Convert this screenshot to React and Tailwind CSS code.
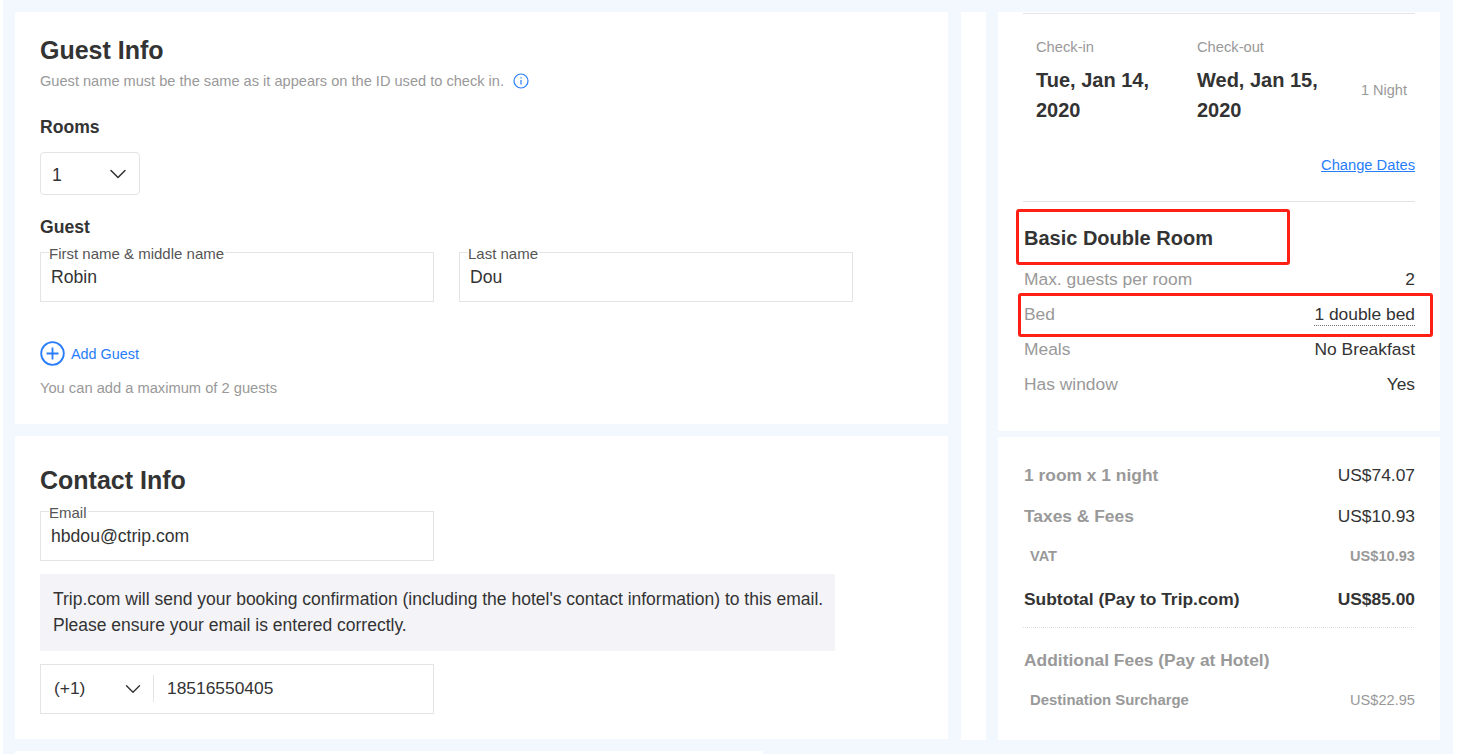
import { ChevronDown } from "lucide-react";

function Field({ label, value, className }) {
  return (
    <div className={`relative h-[50px] border border-[#e4e4e4] ${className}`}>
      <span className="absolute left-2 top-[-7px] bg-white pr-px text-[15px] leading-4 text-[#555]">{label}</span>
      <div className="pl-[10px] pt-[13px] text-[17.6px] leading-[22px] text-[#333]">{value}</div>
    </div>
  );
}

function SpecRow({ label, value, dotted }) {
  return (
    <div className="flex h-[35px] items-center justify-between pl-px text-[17.4px] text-[#999]">
      <span>{label}</span>
      <span className={dotted ? "border-b border-dotted border-[#777] text-[#333] leading-[21px]" : "text-[#333]"}>{value}</span>
    </div>
  );
}

function InfoIcon() {
  return (
    <svg width="16" height="16" viewBox="0 0 16 16" fill="none" stroke="#287dfa" strokeWidth="1.2">
      <circle cx="8" cy="8" r="7" />
      <path d="M8 7v4.5M8 4.2v1.3" />
    </svg>
  );
}

function PlusIcon() {
  return (
    <svg width="25" height="25" viewBox="0 0 25 25" fill="none" stroke="#287dfa">
      <circle cx="12.5" cy="12.5" r="11.3" strokeWidth="1.8" />
      <path d="M6.5 12.5h12M12.5 6.5v12" strokeWidth="1.8" />
    </svg>
  );
}

export default function App() {
  return (
    <div className="h-[755px] overflow-hidden bg-white pl-[3px] pr-[6px] font-['Liberation_Sans',Arial,sans-serif]">
      <div className="flex h-[754px] overflow-hidden bg-[#f3f8fe] pl-3 pt-3">
        <div className="w-[933px] shrink-0">
          <section className="h-[412px] bg-white pl-[25px] pt-[22px]">
            <h2 className="text-[25px] font-bold leading-8 text-[#333]">Guest Info</h2>
            <div className="mt-[7px] flex items-center text-[14.6px] leading-4 text-[#999]">
              Guest name must be the same as it appears on the ID used to check in.
              <span className="ml-[9px]"><InfoIcon /></span>
            </div>
            <h3 className="mt-[28px] text-[17.6px] font-bold leading-5 text-[#333]">Rooms</h3>
            <div className="mt-[15px] flex h-[43px] w-[100px] items-center justify-between rounded border border-[#e4e4e4] pl-[11px] pr-[7px] text-[17.6px] text-[#333]">
              <span className="pt-[3px]">1</span>
              <ChevronDown size={28} strokeWidth={1.3} />
            </div>
            <h3 className="mt-[22px] text-[17.6px] font-bold leading-5 text-[#333]">Guest</h3>
            <div className="mt-[15px] flex gap-[25px]">
              <Field label="First name & middle name" value="Robin" className="w-[394px]" />
              <Field label="Last name" value="Dou" className="w-[394px]" />
            </div>
            <div className="mt-[39px] flex items-center gap-[6px] text-[14.4px] text-[#287dfa]">
              <PlusIcon />
              <span className="pt-[2px]">Add Guest</span>
            </div>
            <p className="mt-[14px] text-[14.7px] leading-4 text-[#999]">You can add a maximum of 2 guests</p>
          </section>

          <section className="mt-3 h-[303px] bg-white pl-[25px] pt-[28px]">
            <h2 className="text-[25px] font-bold leading-8 text-[#333]">Contact Info</h2>
            <Field label="Email" value="hbdou@ctrip.com" className="mt-[15px] w-[394px]" />
            <div className="mt-[13px] h-[77px] w-[795px] bg-[#f3f3f8] pl-[13px] pt-[12px] text-[17.5px] leading-[26px] text-[#333]">
              Trip.com will send your booking confirmation (including the hotel's contact information) to this email.
              <br />
              Please ensure your email is entered correctly.
            </div>
            <div className="mt-[13px] flex h-[50px] w-[394px] items-center border border-[#e4e4e4] pb-px pl-[13px] text-[17.4px] text-[#333]">
              <span className="w-[66px]">(+1)</span>
              <ChevronDown size={26} strokeWidth={1.3} />
              <span className="ml-[7px] h-[27px] border-l border-[#e4e4e4]" />
              <span className="ml-[13px]">18516550405</span>
            </div>
          </section>

          <div className="mt-3 h-10 w-[748px] bg-white" />
        </div>

        <div className="ml-[13px] h-[728px] w-[25px] shrink-0 bg-white" />

        <aside className="ml-3 w-[442px] shrink-0">
          <section className="relative h-[419px] bg-white px-[25px] pt-px">
            <div className="border-t border-[#e4e4e4]" />
            <div className="flex pt-[25px]">
              <div className="w-[174px] pl-[13px]">
                <div className="text-[14.7px] leading-4 text-[#999]">Check-in</div>
                <div className="mt-[10px] w-[130px] text-xl font-bold leading-[30px] text-[#333]">Tue, Jan 14, 2020</div>
              </div>
              <div className="w-[164px]">
                <div className="text-[14.7px] leading-4 text-[#999]">Check-out</div>
                <div className="mt-[10px] w-[130px] text-xl font-bold leading-[30px] text-[#333]">Wed, Jan 15, 2020</div>
              </div>
              <div className="pt-[43px] text-[14.5px] leading-4 text-[#999]">1 Night</div>
            </div>
            <div className="mt-[32px] text-right text-[14.7px] leading-4 text-[#287dfa] underline">Change Dates</div>
            <div className="mt-[28px] border-t border-[#e4e4e4]" />
            <h3 className="mt-[24px] pl-px text-xl font-bold leading-6 text-[#333]">Basic Double Room</h3>
            <div className="mt-[12px]">
              <SpecRow label="Max. guests per room" value="2" />
              <SpecRow label="Bed" value="1 double bed" dotted />
              <SpecRow label="Meals" value="No Breakfast" />
              <SpecRow label="Has window" value="Yes" />
            </div>
            <div className="absolute left-[18px] top-[197px] h-[56px] w-[274px] rounded-[3px] border-[3px] border-[#ff1f14]" />
            <div className="absolute left-[20px] top-[281px] h-[44px] w-[415px] rounded-[3px] border-[3px] border-[#ff1f14]" />
          </section>

          <section className="mt-[6px] h-[303px] bg-white px-[25px] pt-[27px]">
            <div className="flex items-center justify-between pl-px text-[17.4px] font-bold leading-[22px] text-[#999]">
              <span>1 room x 1 night</span>
              <span className="font-normal text-[#333]">US$74.07</span>
            </div>
            <div className="mt-[19px] flex items-center justify-between pl-px text-[17.4px] font-bold leading-[22px] text-[#999]">
              <span>Taxes &amp; Fees</span>
              <span className="font-normal text-[#333]">US$10.93</span>
            </div>
            <div className="mt-[21px] flex items-center justify-between pl-[7px] text-[14.6px] font-bold leading-4 text-[#999]">
              <span>VAT</span>
              <span>US$10.93</span>
            </div>
            <div className="mt-[24px] flex items-center justify-between pl-px text-[17.4px] font-bold leading-[22px] text-[#333]">
              <span>Subtotal (Pay to Trip.com)</span>
              <span>US$85.00</span>
            </div>
            <div className="mr-px mt-[17px] border-t border-dotted border-[#ddd]" />
            <div className="mt-[21px] pl-px text-[17.4px] font-bold leading-[22px] text-[#999]">Additional Fees (Pay at Hotel)</div>
            <div className="mt-[21px] flex items-center justify-between pl-[7px] text-[14.6px] leading-4 text-[#999]">
              <span className="text-[14.9px] font-bold">Destination Surcharge</span>
              <span>US$22.95</span>
            </div>
          </section>
        </aside>
      </div>
    </div>
  );
}
